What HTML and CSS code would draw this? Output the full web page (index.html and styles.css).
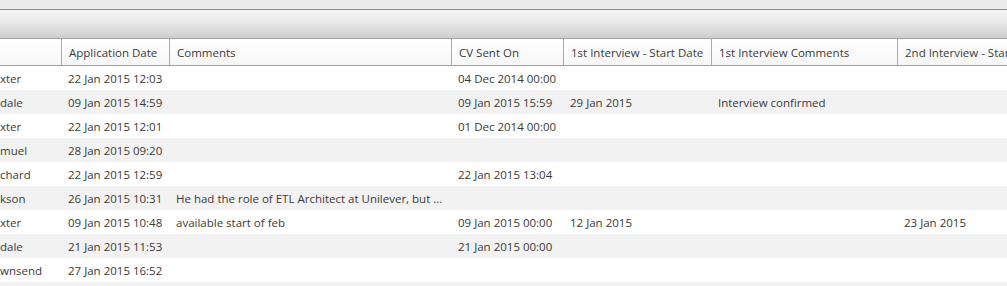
FILE: index.html
```html
<!DOCTYPE html>
<html>
<head>
<meta charset="utf-8">
<link rel="stylesheet" href="styles.css">
</head>
<body>
<div class="topstrip"></div>
<div class="toolbar"></div>
<div class="grid">
  <div class="row head">
    <div class="c"></div>
    <div class="c">Application Date</div>
    <div class="c">Comments</div>
    <div class="c">CV Sent On</div>
    <div class="c">1st Interview - Start Date</div>
    <div class="c">1st Interview Comments</div>
    <div class="c">2nd Interview - Start Date</div>
  </div>
  <div class="row"><div class="c n">xter</div><div class="c">22 Jan 2015 12:03</div><div class="c"></div><div class="c">04 Dec 2014 00:00</div><div class="c"></div><div class="c"></div><div class="c"></div></div>
  <div class="row alt"><div class="c n">dale</div><div class="c">09 Jan 2015 14:59</div><div class="c"></div><div class="c">09 Jan 2015 15:59</div><div class="c">29 Jan 2015</div><div class="c">Interview confirmed</div><div class="c"></div></div>
  <div class="row"><div class="c n">xter</div><div class="c">22 Jan 2015 12:01</div><div class="c"></div><div class="c">01 Dec 2014 00:00</div><div class="c"></div><div class="c"></div><div class="c"></div></div>
  <div class="row alt"><div class="c n">muel</div><div class="c">28 Jan 2015 09:20</div><div class="c"></div><div class="c"></div><div class="c"></div><div class="c"></div><div class="c"></div></div>
  <div class="row"><div class="c n">chard</div><div class="c">22 Jan 2015 12:59</div><div class="c"></div><div class="c">22 Jan 2015 13:04</div><div class="c"></div><div class="c"></div><div class="c"></div></div>
  <div class="row alt"><div class="c n">kson</div><div class="c">26 Jan 2015 10:31</div><div class="c">He had the role of ETL Architect at Unilever, but ...</div><div class="c"></div><div class="c"></div><div class="c"></div><div class="c"></div></div>
  <div class="row"><div class="c n">xter</div><div class="c">09 Jan 2015 10:48</div><div class="c">available start of feb</div><div class="c">09 Jan 2015 00:00</div><div class="c">12 Jan 2015</div><div class="c"></div><div class="c">23 Jan 2015</div></div>
  <div class="row alt"><div class="c n">dale</div><div class="c">21 Jan 2015 11:53</div><div class="c"></div><div class="c">21 Jan 2015 00:00</div><div class="c"></div><div class="c"></div><div class="c"></div></div>
  <div class="row"><div class="c n">wnsend</div><div class="c">27 Jan 2015 16:52</div><div class="c"></div><div class="c"></div><div class="c"></div><div class="c"></div><div class="c"></div></div>
  <div class="row alt"><div class="c n"></div><div class="c"></div><div class="c"></div><div class="c"></div><div class="c"></div><div class="c"></div><div class="c"></div></div>
</div>
</body>
</html>
```

FILE: styles.css
```css
html, body {
  margin: 0;
  padding: 0;
  background: #ffffff;
  overflow: hidden;
}
body {
  font-family: "Open Sans", "Noto Sans", sans-serif;
  font-size: 11.5px;
  color: #3a3a3a;
  width: 1007px;
  height: 286px;
}
.topstrip {
  height: 9px;
  background: #ececec;
  border-bottom: 1px solid #8c8c8c;
}
.toolbar {
  height: 28px;
  background: linear-gradient(to bottom, #f6f6f6 0%, #e6e6e6 50%, #cdcdcd 100%);
  border-bottom: 1px solid #a4a4a4;
}
.grid {
  display: flex;
  flex-direction: column;
}
.row {
  display: grid;
  grid-template-columns: 62px 108px 282px 112px 148px 186px 1fr;
  height: 24px;
  align-items: stretch;
  white-space: nowrap;
  flex: none;
}
.row.alt {
  background: #f2f2f2;
}
.row .c {
  padding-left: 6px;
  padding-top: 1px;
  overflow: hidden;
  line-height: 23px;
}
.row .c.n {
  padding-left: 0;
}
.row.head {
  height: 26px;
  background: linear-gradient(to bottom, #ffffff 0%, #f7f7f7 100%);
  border-bottom: 1px solid #a0a0a0;
}
.row.head .c {
  padding-top: 2px;
  line-height: 24px;
  border-right: 1px solid #ababab;
  padding-left: 7px;
}
.row.head .c:last-child {
  border-right: none;
}
```
